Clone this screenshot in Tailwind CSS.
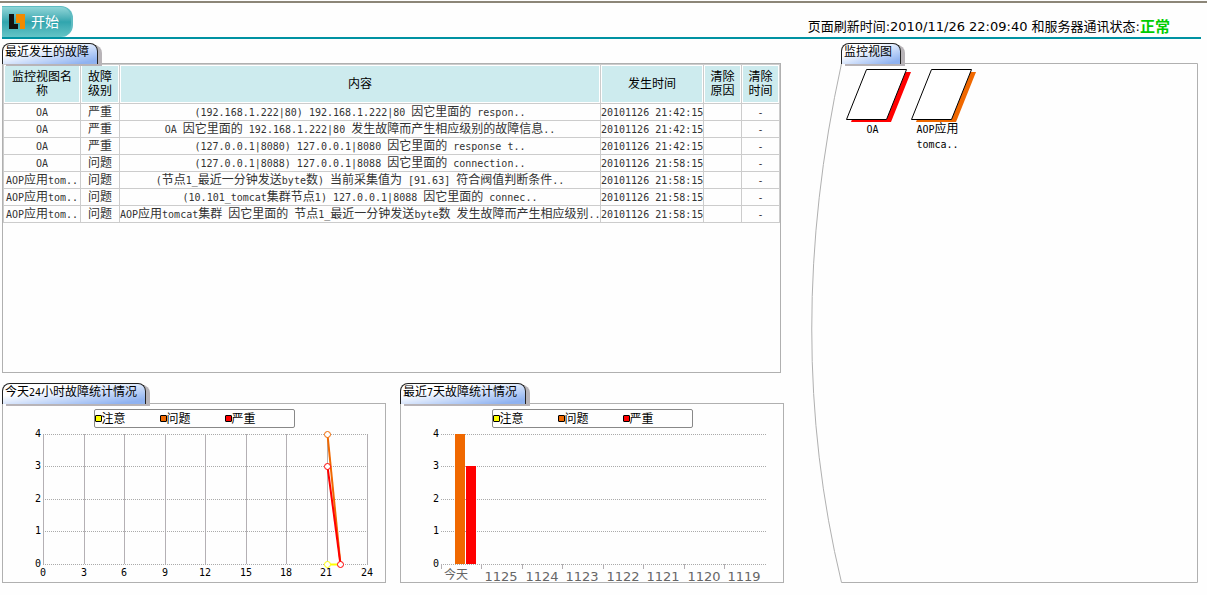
<!DOCTYPE html>
<html lang="zh-CN">
  <head>
    <meta charset="UTF-8" />
    <meta name="viewport" content="width=device-width, initial-scale=1.0" />
    <title>故障监控</title>
    <script src="https://cdn.jsdelivr.net/npm/@tailwindcss/browser@4"></script>
  </head>
  <body class="min-h-screen bg-[#fefefe] pt-px font-['DejaVu_Sans_Mono','Noto_Sans_CJK_SC',sans-serif] text-xs text-black">
    <!-- Header -->
    <header class="border-t-2 border-[#8c8678]">
      <div class="ml-[2px] mr-[6px] flex h-9 items-end justify-between border-b-2 border-[#0092a2]">
        <button
          type="button"
          class="flex h-[31px] w-[71px] items-center gap-[5px] rounded-r-xl border-t border-r-2 border-[#5fbcc2] bg-linear-to-b from-[#8fd6d8] via-[#30a5ae] to-[#63c4c6] pl-[6px] text-sm text-white"
        >
          <svg class="h-4 w-[18px]" viewBox="0 0 18 16" aria-hidden="true">
            <path d="M1 0h5v10h4v5H1z" fill="#111" />
            <path d="M8 0h9v15h-5V9H8z" fill="#f18a00" />
          </svg>
          开始
        </button>
        <p class="flex items-center pr-[31px] font-['DejaVu_Sans','Noto_Sans_CJK_SC',sans-serif] text-[13px] leading-5">
          页面刷新时间:2010/11/26 22:09:40 和服务器通讯状态:<strong class="text-[15px] text-[#00cc00]">正常</strong>
        </p>
      </div>
    </header>

    <main class="mt-1 grid grid-cols-[782fr_387fr] gap-[27px] pl-[2px] pr-[9px]">
      <div>
        <!-- Recent faults -->
        <section class="mr-[3px]">
          <h2 class="relative h-[21px] w-fit rounded-t-lg border border-b-0 border-[#222] bg-linear-to-br from-white from-30% to-[#8fb2f0] to-90% pl-[2px] pr-2 leading-4 shadow-[4px_2px_0_#b8b4b8]">最近发生的故障</h2>
          <div class="-mt-px min-h-[310px] border border-[#b0b0b0]">
            <table class="w-full table-fixed border-collapse text-center text-[#333]">
              <colgroup>
                <col class="w-[77px]" />
                <col class="w-[39px]" />
                <col />
                <col class="w-[103px]" />
                <col class="w-[38px]" />
                <col class="w-[38px]" />
              </colgroup>
              <thead>
                <tr class="h-[39px] bg-[#cdebee] leading-[14px] text-black">
                  <th class="border border-[#ccc] px-1 font-normal shadow-[inset_0_0_0_1px_#fff]">监控视图名称</th>
                  <th class="border border-[#ccc] px-1 font-normal shadow-[inset_0_0_0_1px_#fff]">故障级别</th>
                  <th class="border border-[#ccc] px-1 font-normal shadow-[inset_0_0_0_1px_#fff]">内容</th>
                  <th class="border border-[#ccc] px-1 font-normal shadow-[inset_0_0_0_1px_#fff]">发生时间</th>
                  <th class="border border-[#ccc] px-1 font-normal shadow-[inset_0_0_0_1px_#fff]">清除原因</th>
                  <th class="border border-[#ccc] px-1 font-normal shadow-[inset_0_0_0_1px_#fff]">清除时间</th>
                </tr>
              </thead>
              <tbody id="faults" class="leading-[14px]"></tbody>
            </table>
          </div>
        </section>

        <div class="mt-[10px] grid grid-cols-2 gap-[14px]">
          <!-- Last 24 hours -->
          <section>
            <h2 class="relative h-[21px] w-fit rounded-t-lg border border-b-0 border-[#222] bg-linear-to-br from-white from-30% to-[#8fb2f0] to-90% pl-[2px] pr-2 leading-4 shadow-[4px_2px_0_#b8b4b8]">今天<span class="text-[10px]">24</span>小时故障统计情况</h2>
            <div class="-mt-px border border-[#b0b0b0] pt-[5px]">
              <ul class="mx-auto flex h-[19px] w-[201px] items-center rounded-xs border border-[#888] leading-4">
                <li class="flex w-[65px] items-center"><i class="size-[7px] rounded-[1px] border border-black bg-[#ffff00]"></i>注意</li>
                <li class="flex w-[65px] items-center"><i class="size-[7px] rounded-[1px] border border-black bg-[#f06800]"></i>问题</li>
                <li class="flex w-[65px] items-center"><i class="size-[7px] rounded-[1px] border border-black bg-[#ff0000]"></i>严重</li>
              </ul>
              <svg class="block w-full overflow-visible" viewBox="0 0 382 154" role="img" aria-label="今天24小时故障统计情况">
                <path
                  d="M40.5 6v130M81.5 6v130M121.5 6v130M162.5 6v130M202.5 6v130M243.5 6v130M283.5 6v130M324.5 6v130M364.5 6v130"
                  stroke="#b4b0b4"
                />
                <path
                  d="M40 6.5h325M40 38.5h325M40 71.5h325M40 103.5h325M40 136.5h325"
                  stroke="#aaa"
                  stroke-dasharray="1 1"
                />
                <g fill="#fff" stroke-width="2">
                  <path d="M324.5 136.5h13" stroke="#ffff00" />
                  <circle cx="324.5" cy="136.5" r="3" stroke="#ffff00" stroke-width="1" />
                  <path d="M324.5 6.5l13 130" stroke="#f06800" />
                  <circle cx="324.5" cy="6.5" r="3" stroke="#f06800" stroke-width="1" />
                  <path d="M324.5 38.5l13 98" stroke="#ff0000" />
                  <circle cx="324.5" cy="38.5" r="3" stroke="#ff0000" stroke-width="1" />
                  <circle cx="337.5" cy="136.5" r="3" stroke="#ff0000" stroke-width="1" />
                </g>
                <g font-size="10" text-anchor="middle">
                  <text x="35" y="9">4</text>
                  <text x="35" y="41">3</text>
                  <text x="35" y="74">2</text>
                  <text x="35" y="106">1</text>
                  <text x="35" y="139">0</text>
                  <text x="40" y="148">0</text>
                  <text x="81" y="148">3</text>
                  <text x="121" y="148">6</text>
                  <text x="162" y="148">9</text>
                  <text x="202" y="148">12</text>
                  <text x="243" y="148">15</text>
                  <text x="283" y="148">18</text>
                  <text x="323" y="148">21</text>
                  <text x="364" y="148">24</text>
                </g>
              </svg>
            </div>
          </section>

          <!-- Last 7 days -->
          <section>
            <h2 class="relative h-[21px] w-fit rounded-t-lg border border-b-0 border-[#222] bg-linear-to-br from-white from-30% to-[#8fb2f0] to-90% pl-[2px] pr-2 leading-4 shadow-[4px_2px_0_#b8b4b8]">最近<span class="text-[10px]">7</span>天故障统计情况</h2>
            <div class="-mt-px border border-[#b0b0b0] pt-[5px]">
              <ul class="mx-auto flex h-[19px] w-[201px] items-center rounded-xs border border-[#888] leading-4">
                <li class="flex w-[65px] items-center"><i class="size-[7px] rounded-[1px] border border-black bg-[#ffff00]"></i>注意</li>
                <li class="flex w-[65px] items-center"><i class="size-[7px] rounded-[1px] border border-black bg-[#f06800]"></i>问题</li>
                <li class="flex w-[65px] items-center"><i class="size-[7px] rounded-[1px] border border-black bg-[#ff0000]"></i>严重</li>
              </ul>
              <svg class="block w-full overflow-visible" viewBox="0 0 382 154" role="img" aria-label="最近7天故障统计情况">
                <path
                  d="M40 6.5h325M40 38.5h325M40 71.5h325M40 103.5h325M40 136.5h325"
                  stroke="#aaa"
                  stroke-dasharray="1 1"
                />
                <path
                  d="M40.5 136v5M80.5 136v5M121.5 136v5M161.5 136v5M202.5 136v5M242.5 136v5M283.5 136v5M323.5 136v5"
                  stroke="#b4b0b4"
                />
                <rect x="54" y="6" width="10" height="130" fill="#f06800" />
                <rect x="65" y="38" width="10" height="98" fill="#ff0000" />
                <g font-size="10" text-anchor="middle">
                  <text x="35" y="9">4</text>
                  <text x="35" y="41">3</text>
                  <text x="35" y="74">2</text>
                  <text x="35" y="106">1</text>
                  <text x="35" y="139">0</text>
                </g>
                <g class="font-['DejaVu_Sans','Noto_Sans_CJK_SC',sans-serif]" font-size="13" fill="#666" text-anchor="middle">
                  <text x="55" y="151" font-size="12">今天</text>
                  <text x="100" y="153">1125</text>
                  <text x="141" y="153">1124</text>
                  <text x="181" y="153">1123</text>
                  <text x="222" y="153">1122</text>
                  <text x="262" y="153">1121</text>
                  <text x="303" y="153">1120</text>
                  <text x="343" y="153">1119</text>
                </g>
              </svg>
            </div>
          </section>
        </div>
      </div>

      <!-- Monitor views -->
      <section class="relative">
        <svg class="absolute inset-x-0 top-5 bottom-0 h-[calc(100%-20px)] w-full" viewBox="0 0 387 520" preserveAspectRatio="none" fill="none" aria-hidden="true">
          <path d="M30.5 .5H386.5V519.5H30.5Q-29 272 30.5 .5z" stroke="#b0b0b0" vector-effect="non-scaling-stroke" />
        </svg>
        <h2 class="relative ml-[30px] h-[21px] w-fit rounded-t-lg border border-b-0 border-[#222] bg-linear-to-br from-white from-30% to-[#8fb2f0] to-90% pl-[2px] pr-2 leading-4 shadow-[4px_2px_0_#b8b4b8]">监控视图</h2>
        <div class="relative ml-[29px] mt-1 flex items-start text-center leading-[15px]">
          <a href="#oa" class="w-[65px]">
            <svg class="block h-[54px] w-[65px] overflow-visible" viewBox="0 0 65 54" aria-hidden="true">
              <path d="M31 4h40l-20 50h-40z" fill="#ff0000" />
              <path d="M26.5 1.5h40l-20 50h-40z" fill="#fff" stroke="#000" />
            </svg>
            <span class="text-[10px]">OA</span>
          </a>
          <a href="#aop" class="w-[65px]">
            <svg class="block h-[54px] w-[65px] overflow-visible" viewBox="0 0 65 54" aria-hidden="true">
              <path d="M31 4h40l-20 50h-40z" fill="#f06800" />
              <path d="M26.5 1.5h40l-20 50h-40z" fill="#fff" stroke="#000" />
            </svg>
            <span class="text-[10px]">AOP</span>应用<br /><span class="text-[10px]">tomca..</span>
          </a>
        </div>
      </section>
    </main>

    <script>
      const faults = [
        ["OA", "严重", "(192.168.1.222|80) 192.168.1.222|80 因它里面的 respon..", "20101126 21:42:15"],
        ["OA", "严重", "OA 因它里面的 192.168.1.222|80 发生故障而产生相应级别的故障信息..", "20101126 21:42:15"],
        ["OA", "严重", "(127.0.0.1|8080) 127.0.0.1|8080 因它里面的 response t..", "20101126 21:42:15"],
        ["OA", "问题", "(127.0.0.1|8088) 127.0.0.1|8088 因它里面的 connection..", "20101126 21:58:15"],
        ["AOP应用tom..", "问题", "(节点1_最近一分钟发送byte数) 当前采集值为 [91.63] 符合阀值判断条件..", "20101126 21:58:15"],
        ["AOP应用tom..", "问题", "(10.101_tomcat集群节点1) 127.0.0.1|8088 因它里面的 connec..", "20101126 21:58:15"],
        ["AOP应用tom..", "问题", "AOP应用tomcat集群 因它里面的 节点1_最近一分钟发送byte数 发生故障而产生相应级别..", "20101126 21:58:15"],
      ];

      // Latin runs are set smaller so that two letters take the width of one Chinese character
      const latin = (text) => text.replace(/[\x20-\x7e]+/g, '<span class="text-[10px]">$&</span>');

      document.getElementById("faults").innerHTML = faults
        .map(
          (row) =>
            '<tr class="h-[17px]">' +
            [...row, "", "-"]
              .map((cell) => `<td class="border border-[#ccc] p-0 whitespace-nowrap">${latin(cell)}</td>`)
              .join("") +
            "</tr>"
        )
        .join("");
    </script>
  </body>
</html>
